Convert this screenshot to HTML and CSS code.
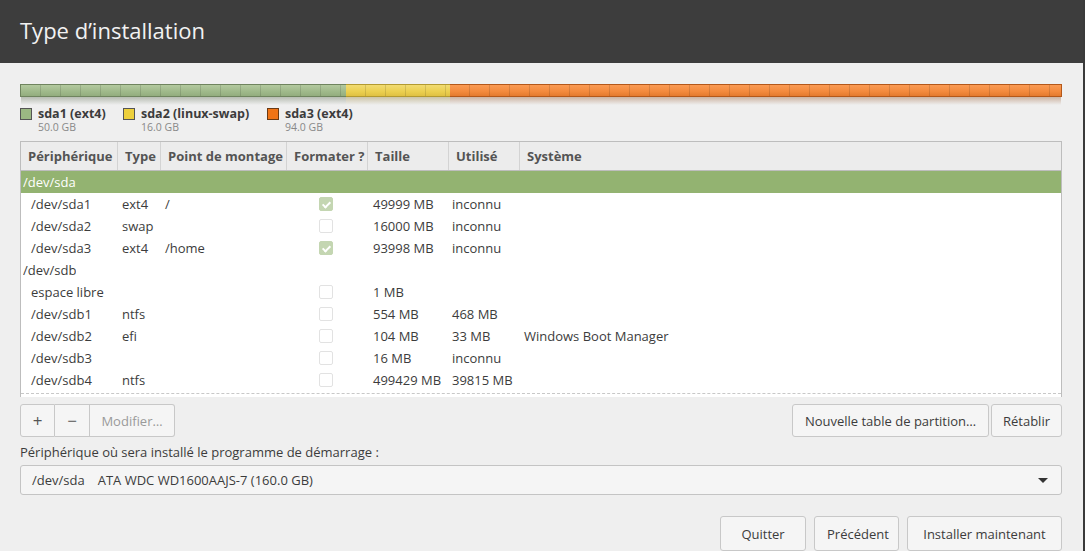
FILE: index.html
```html
<!DOCTYPE html>
<html lang="fr">
<head>
<meta charset="utf-8">
<title>Type d’installation</title>
<link rel="stylesheet" href="styles.css">
</head>
<body>
<div class="window">
  <header class="titlebar"><h1>Type d’installation</h1></header>
  <main class="content">
    <div class="diskbar">
      <div class="seg seg-green" style="width:326px"></div>
      <div class="seg seg-yellow" style="width:104px"></div>
      <div class="seg seg-orange" style="flex:1"></div>
    </div>
    <div class="legend">
      <div class="leg leg-1">
        <span class="swatch sw-green"></span>
        <div class="leg-text"><div class="leg-name">sda1 (ext4)</div><div class="leg-size">50.0 GB</div></div>
      </div>
      <div class="leg leg-2">
        <span class="swatch sw-yellow"></span>
        <div class="leg-text"><div class="leg-name">sda2 (linux-swap)</div><div class="leg-size">16.0 GB</div></div>
      </div>
      <div class="leg">
        <span class="swatch sw-orange"></span>
        <div class="leg-text"><div class="leg-name">sda3 (ext4)</div><div class="leg-size">94.0 GB</div></div>
      </div>
    </div>

    <div class="table">
      <div class="row head">
        <div class="c">Périphérique</div><div class="c">Type</div><div class="c">Point de montage</div><div class="c">Formater ?</div><div class="c">Taille</div><div class="c">Utilisé</div><div class="c">Système</div>
      </div>
      <div class="row disk selected"><div class="c">/dev/sda</div></div>
      <div class="row part"><div class="c">/dev/sda1</div><div class="c">ext4</div><div class="c">/</div><div class="c cb"><span class="check on"></span></div><div class="c">49999 MB</div><div class="c">inconnu</div><div class="c"></div></div>
      <div class="row part"><div class="c">/dev/sda2</div><div class="c">swap</div><div class="c"></div><div class="c cb"><span class="check"></span></div><div class="c">16000 MB</div><div class="c">inconnu</div><div class="c"></div></div>
      <div class="row part"><div class="c">/dev/sda3</div><div class="c">ext4</div><div class="c">/home</div><div class="c cb"><span class="check on"></span></div><div class="c">93998 MB</div><div class="c">inconnu</div><div class="c"></div></div>
      <div class="row disk"><div class="c">/dev/sdb</div></div>
      <div class="row part"><div class="c">espace libre</div><div class="c"></div><div class="c"></div><div class="c cb"><span class="check"></span></div><div class="c">1 MB</div><div class="c"></div><div class="c"></div></div>
      <div class="row part"><div class="c">/dev/sdb1</div><div class="c">ntfs</div><div class="c"></div><div class="c cb"><span class="check"></span></div><div class="c">554 MB</div><div class="c">468 MB</div><div class="c"></div></div>
      <div class="row part"><div class="c">/dev/sdb2</div><div class="c">efi</div><div class="c"></div><div class="c cb"><span class="check"></span></div><div class="c">104 MB</div><div class="c">33 MB</div><div class="c">Windows Boot Manager</div></div>
      <div class="row part"><div class="c">/dev/sdb3</div><div class="c"></div><div class="c"></div><div class="c cb"><span class="check"></span></div><div class="c">16 MB</div><div class="c">inconnu</div><div class="c"></div></div>
      <div class="row part"><div class="c">/dev/sdb4</div><div class="c">ntfs</div><div class="c"></div><div class="c cb"><span class="check"></span></div><div class="c">499429 MB</div><div class="c">39815 MB</div><div class="c"></div></div>
      <div class="table-end"></div>
    </div>

    <div class="toolbar">
      <div class="btn-group">
        <button class="btn icon">+</button><button class="btn icon">−</button><button class="btn disabled">Modifier…</button>
      </div>
      <div class="btn-group right">
        <button class="btn">Nouvelle table de partition…</button><button class="btn">Rétablir</button>
      </div>
    </div>

    <div class="boot-label">Périphérique où sera installé le programme de démarrage :</div>
    <div class="combo">
      <span class="combo-dev">/dev/sda</span><span class="combo-name">ATA WDC WD1600AAJS-7 (160.0 GB)</span>
      <span class="arrow"></span>
    </div>

    <div class="actions">
      <button class="btn big">Quitter</button>
      <button class="btn big">Précédent</button>
      <button class="btn big">Installer maintenant</button>
    </div>
  </main>
</div>
</body>
</html>
```

FILE: styles.css
```css
* { box-sizing: border-box; }
html, body { margin: 0; padding: 0; }
body {
  width: 1085px;
  height: 551px;
  overflow: hidden;
  background: #efefef;
  font-family: "Open Sans", "Noto Sans", sans-serif;
  color: #3c3c3c;
}
.window {
  height: 551px;
  border-right: 2px solid #3a3a3a;
  display: flex;
  flex-direction: column;
}
.titlebar {
  height: 63px;
  background: #3d3d3d;
  display: flex;
  align-items: center;
  padding-left: 20px;
  padding-bottom: 3px;
  flex-shrink: 0;
}
.titlebar h1 {
  margin: 0;
  font-weight: 400;
  font-size: 22px;
  color: #f2f2f2;
  letter-spacing: 0;
}
.content {
  padding: 21px 21px 0 20px;
  display: flex;
  flex-direction: column;
}
/* disk bar */
.diskbar {
  display: flex;
  height: 13px;
  width: 1042px;
  position: relative;
}
.seg {
  height: 13px;
  position: relative;
  border-top: 1px solid;
  border-bottom: 1px solid;
}
.seg::before {
  content: "";
  position: absolute;
  inset: 0;
  background: repeating-linear-gradient(90deg, transparent 0 19px, rgba(0,0,0,0.12) 19px 20px);
}
.seg::after {
  content: "";
  position: absolute;
  left: 0; right: 0;
  top: 12px;
  height: 8px;
  opacity: 0.35;
}
.seg-green {
  background: linear-gradient(#b3c99f, #9fb98a 60%, #93ad7e);
  border-color: #6f845e;
  border-left: 1px solid #6f845e;
}
.seg-green::after { background: linear-gradient(#4f5f42, rgba(239,239,239,0)); }
.seg-yellow {
  background: linear-gradient(#f1db72, #ebcf4f 60%, #e0c142);
  border-color: #b39a30;
}
.seg-yellow::after { background: linear-gradient(#8a7420, rgba(239,239,239,0)); }
.seg-orange {
  background: linear-gradient(#fa9a54, #f38a3d 60%, #e47a2e);
  border-color: #b4581a;
  border-right: 1px solid #b4581a;
}
.seg-orange::after { background: linear-gradient(#8c4414, rgba(239,239,239,0)); }

/* legend */
.legend {
  display: flex;
  margin-top: 9px;
  height: 35px;
}
.leg { display: flex; align-items: flex-start; }
.leg-1 { width: 103px; }
.leg-2 { width: 144px; }
.swatch {
  width: 12px; height: 12px;
  margin-top: 2px;
  border: 1px solid #555;
  margin-right: 6px;
}
.sw-green { background: #9bb883; }
.sw-yellow { background: #edd03d; }
.sw-orange { background: #f07416; border-color: #6a3a14; }
.leg-name { font-weight: 700; font-size: 12.5px; line-height: 15px; color: #3c3c3c; }
.leg-size { font-size: 10.5px; color: #888; line-height: 13px; margin-top: 0; }

/* table */
.table {
  width: 1042px;
  height: 256px;
  background: #fff;
  border: 1px solid #bdbdbd;
  border-bottom: none;
  font-size: 13px;
  display: flex;
  flex-direction: column;
  overflow: hidden;
}
.row {
  display: grid;
  grid-template-columns: 96px 43px 126px 81px 81px 71px 1fr;
  height: 22px;
  align-items: center;
  flex-shrink: 0;
}
.row .c { white-space: nowrap; overflow: hidden; }
.row.head {
  height: 29px;
  background: #ececec;
  border-bottom: 1px solid #bdbdbd;
  font-weight: 700;
  color: #545454;
  align-items: stretch;
}
.row.head .c {
  padding-left: 7px;
  display: flex;
  align-items: center;
  border-left: 1px solid #d3d3d3;
}
.row.head .c:first-child { border-left: none; }
.row.disk { display: flex; padding-left: 2px; }
.row.disk.selected { background: #93b371; color: #fff; }
.row.part .c:nth-child(1) { padding-left: 10px; }
.row.part .c:nth-child(2) { padding-left: 5px; }
.row.part .c:nth-child(3) { padding-left: 5px; }
.row.part .c:nth-child(5) { padding-left: 6px; }
.row.part .c:nth-child(6) { padding-left: 4px; }
.row.part .c:nth-child(7) { padding-left: 5px; }
.cb { display: flex; justify-content: flex-start; padding-left: 33px; }
.check {
  width: 14px; height: 14px;
  border: 1px solid #e2e2e2;
  border-radius: 2px;
  background: #fff;
  position: relative;
}
.check.on {
  background: #c4d6b2;
  border-color: #c4d6b2;
}
.check.on::after {
  content: "";
  position: absolute;
  left: 4px; top: 2px;
  width: 3px; height: 6px;
  border: solid #fff;
  border-width: 0 2px 2px 0;
  transform: rotate(45deg);
}
.table-end {
  margin-top: 2px;
  border-bottom: 1px dashed #c8c8c8;
}

/* toolbar */
.toolbar {
  display: flex;
  justify-content: space-between;
  margin-top: 7px;
  height: 33px;
}
.btn-group { display: flex; }
.btn {
  font-family: inherit;
  font-size: 13px;
  color: #3c3c3c;
  background: #f5f5f5;
  border: 1px solid #c8c8c8;
  border-radius: 3px;
  height: 33px;
  padding: 0 12px;
  margin: 0;
}
.btn-group .btn { border-radius: 0; }
.btn-group .btn:first-child { border-radius: 3px 0 0 3px; }
.btn-group .btn:last-child { border-radius: 0 3px 3px 0; }
.btn-group .btn + .btn { border-left: none; }
.btn-group.right .btn + .btn { margin-left: 2px; border-left: 1px solid #c8c8c8; border-radius: 3px; }
.btn-group.right .btn:first-child { border-radius: 3px; }
.btn.icon { width: 35px; padding: 0; font-size: 17px; color: #555; }
.btn.disabled { color: #9a9a9a; width: 85px; padding: 0; }
.btn-group.right .btn:first-child { width: 197px; padding: 0; }
.btn-group.right .btn:last-child { width: 71px; padding: 0; }

.boot-label {
  margin-top: 7px;
  font-size: 13px;
  color: #3c3c3c;
  line-height: 16px;
}
.combo {
  margin-top: 5px;
  width: 1042px;
  height: 30px;
  background: #f5f5f5;
  border: 1px solid #c4c4c4;
  border-radius: 3px;
  display: flex;
  align-items: center;
  padding-left: 11px;
  font-size: 13px;
  position: relative;
}
.combo-name { margin-left: 13px; }
.arrow {
  margin-left: auto;
  margin-right: 13px;
  width: 0; height: 0;
  border-left: 5px solid transparent;
  border-right: 5px solid transparent;
  border-top: 5px solid #333;
}
.actions {
  margin-top: 21px;
  display: flex;
  justify-content: flex-end;
  gap: 8px;
}
.btn.big { height: 35px; }
.actions .btn:nth-child(1) { width: 86px; }
.actions .btn:nth-child(2) { width: 85px; }
.actions .btn:nth-child(3) { width: 155px; }
```
